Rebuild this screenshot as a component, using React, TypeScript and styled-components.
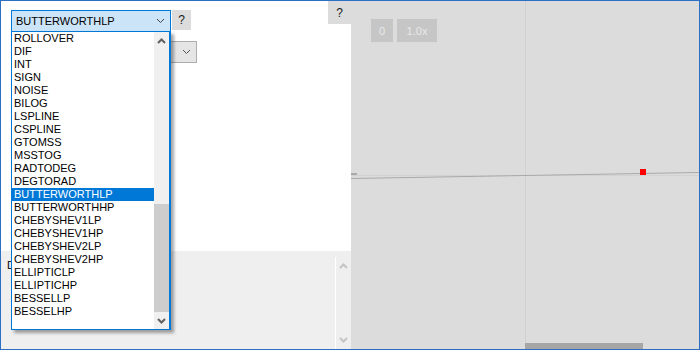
import styled, { createGlobalStyle } from 'styled-components';

const GlobalStyle = createGlobalStyle`
  html, body {
    margin: 0;
    padding: 0;
    background: #ffffff;
  }
  body {
    font-family: 'Liberation Sans', Arial, sans-serif;
    font-size: 11px;
  }
`;

const FILTERS = [
  'ROLLOVER', 'DIF', 'INT', 'SIGN', 'NOISE', 'BILOG', 'LSPLINE', 'CSPLINE',
  'GTOMSS', 'MSSTOG', 'RADTODEG', 'DEGTORAD', 'BUTTERWORTHLP', 'BUTTERWORTHHP',
  'CHEBYSHEV1LP', 'CHEBYSHEV1HP', 'CHEBYSHEV2LP', 'CHEBYSHEV2HP', 'ELLIPTICLP',
  'ELLIPTICHP', 'BESSELLP', 'BESSELHP',
];

const selected = 'BUTTERWORTHLP';

const Frame = styled.div`
  width: 700px;
  height: 350px;
  box-sizing: border-box;
  border: 1px solid #2a6fc2;
  display: flex;
  overflow: hidden;
`;

const LeftPane = styled.div`
  width: 350px;
  display: flex;
  flex-direction: column;
`;

const TopArea = styled.div`
  height: 250px;
  background: #ffffff;
  display: grid;
  grid-template-columns: 1fr auto;
`;

const Controls = styled.div`
  padding: 9px 0 0 10px;
  display: flex;
  flex-direction: column;
  gap: 9px;
`;

const Row = styled.div`
  display: flex;
  gap: 1px;
  align-items: flex-start;
`;

const SelectWrap = styled.div`
  position: relative;
`;

const SelectBox = styled.div<{ $open?: boolean; $width: number }>`
  width: ${p => p.$width}px;
  height: 22px;
  box-sizing: border-box;
  border: 1px solid ${p => (p.$open ? '#0078d7' : '#adadad')};
  background: ${p => (p.$open ? '#cce4f7' : '#e5e5e5')};
  display: flex;
  align-items: center;
  padding: 0 5px 0 4px;
  color: #000;
  font-size: 11px;
`;

const SelectText = styled.span`
  flex: 1;
  white-space: nowrap;
`;

const HelpButton = styled.div<{ $tall?: number }>`
  width: ${p => (p.$tall ? 23 : 19)}px;
  height: ${p => p.$tall ?? 20}px;
  background: #dcdcdc;
  display: flex;
  align-items: center;
  justify-content: center;
  font-size: 12px;
  color: #1a1a1a;
`;

const DropList = styled.div`
  position: absolute;
  top: 21px;
  left: 0;
  width: 160px;
  height: 299px;
  box-sizing: border-box;
  border: 1px solid #0078d7;
  border-right-width: 2px;
  background: #ffffff;
  box-shadow: 3px 3px 3px rgba(0, 0, 0, 0.35);
  display: flex;
  z-index: 5;
`;

const Items = styled.div`
  flex: 1;
  display: flex;
  flex-direction: column;
`;

const Item = styled.div<{ $active?: boolean }>`
  height: 13px;
  line-height: 13px;
  padding-left: 2px;
  font-size: 11px;
  white-space: nowrap;
  color: ${p => (p.$active ? '#ffffff' : '#000000')};
  background: ${p => (p.$active ? '#0078d7' : 'transparent')};
`;

const ScrollTrack = styled.div`
  width: 15px;
  background: #f0f0f0;
  display: flex;
  flex-direction: column;
  align-items: center;
`;

const ScrollArrow = styled.div`
  height: 17px;
  display: flex;
  align-items: center;
  justify-content: center;
`;

const ScrollBody = styled.div`
  flex: 1;
  width: 100%;
  display: flex;
  flex-direction: column;
  justify-content: flex-end;
  padding-bottom: 0;
`;

const ScrollThumb = styled.div`
  width: 15px;
  height: 108px;
  background: #cdcdcd;
`;

const BottomArea = styled.div`
  flex: 1;
  background: #efefef;
  display: flex;
`;

const BottomLabel = styled.div`
  flex: 1;
  padding: 8px 0 0 6px;
  font-size: 11px;
  color: #000;
`;

const PanelScroll = styled.div`
  width: 15px;
  margin-top: 6px;
  border-left: 1px solid #ffffff;
  display: flex;
  flex-direction: column;
  justify-content: space-between;
  align-items: center;
  padding: 6px 0 6px;
`;

const Canvas = styled.div`
  flex: 1;
  position: relative;
  background: #dcdcdc;
`;

const Toolbar = styled.div`
  display: flex;
  gap: 4px;
  padding: 18px 0 0 20px;
  position: relative;
  z-index: 1;
`;

const ToolButton = styled.div<{ $w: number }>`
  width: ${p => p.$w}px;
  height: 23px;
  background: #c6c6c6;
  color: #e9e9e9;
  font-size: 11px;
  display: flex;
  align-items: center;
  justify-content: center;
`;

const Plot = styled.svg`
  position: absolute;
  inset: 0;
`;

const HScrollThumb = styled.div`
  position: absolute;
  left: 174px;
  bottom: 0;
  width: 118px;
  height: 6px;
  background: #a6a6a6;
`;

const Chevron = ({ up, color, bold }: { up?: boolean; color: string; bold?: boolean }) => (
  <svg width="9" height="6" viewBox="0 0 9 6">
    <polyline
      points={up ? '1,5 4.5,1.5 8,5' : '1,1 4.5,4.5 8,1'}
      fill="none"
      stroke={color}
      strokeWidth={bold ? 2 : 1}
    />
  </svg>
);

export default function App() {
  return (
    <>
      <GlobalStyle />
      <Frame>
        <LeftPane>
          <TopArea>
            <Controls>
              <Row>
                <SelectWrap>
                  <SelectBox $open $width={160}>
                    <SelectText>{selected}</SelectText>
                    <Chevron color="#444" />
                  </SelectBox>
                  <DropList>
                    <Items>
                      {FILTERS.map(f => (
                        <Item key={f} $active={f === selected}>{f}</Item>
                      ))}
                    </Items>
                    <ScrollTrack>
                      <ScrollArrow><Chevron up bold color="#606060" /></ScrollArrow>
                      <ScrollBody><ScrollThumb /></ScrollBody>
                      <ScrollArrow><Chevron bold color="#606060" /></ScrollArrow>
                    </ScrollTrack>
                  </DropList>
                </SelectWrap>
                <HelpButton>?</HelpButton>
              </Row>
              <Row>
                <SelectBox $width={186}>
                  <SelectText />
                  <Chevron color="#555" />
                </SelectBox>
              </Row>
            </Controls>
            <HelpButton $tall={23}>?</HelpButton>
          </TopArea>
          <BottomArea>
            <BottomLabel>D</BottomLabel>
            <PanelScroll>
              <Chevron up bold color="#c4c4c4" />
              <Chevron bold color="#c4c4c4" />
            </PanelScroll>
          </BottomArea>
        </LeftPane>
        <Canvas>
          <Plot width="348" height="348" viewBox="0 0 348 348">
            <line x1="174.5" y1="0" x2="174.5" y2="348" stroke="#d0d0d0" />
            <line x1="0" y1="174.5" x2="348" y2="174.5" stroke="#d2d2d2" />
            <line x1="0" y1="177.5" x2="348" y2="171.5" stroke="#a9a9a9" />
            <rect x="0" y="172" width="6" height="2" fill="#a9a9a9" />
            <rect x="289" y="168" width="6" height="6" fill="#ff0000" />
          </Plot>
          <Toolbar>
            <ToolButton $w={22}>0</ToolButton>
            <ToolButton $w={40}>1.0x</ToolButton>
          </Toolbar>
          <HScrollThumb />
        </Canvas>
      </Frame>
    </>
  );
}
